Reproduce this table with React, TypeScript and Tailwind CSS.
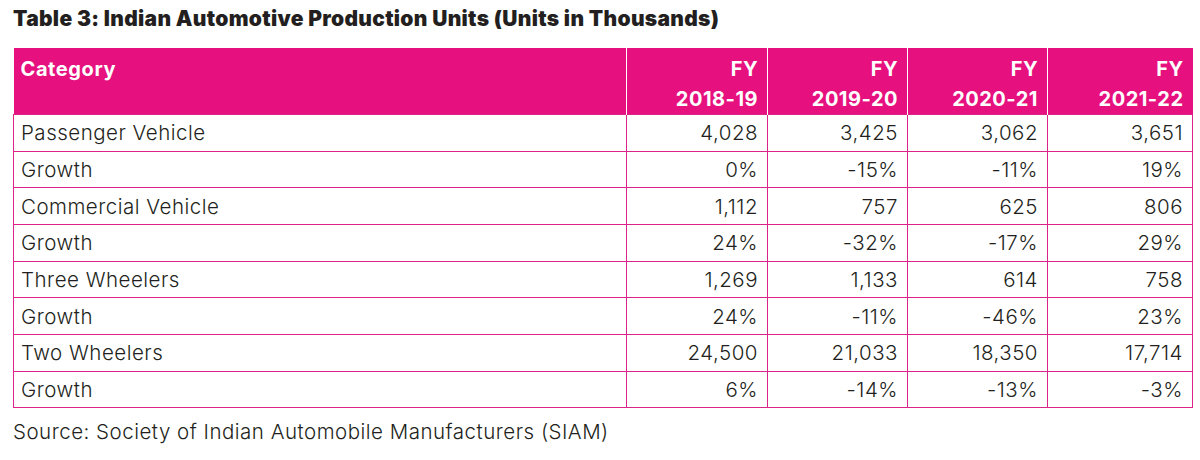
import React from "react";

const rows: [string, string, string, string, string][] = [
  ["Passenger Vehicle", "4,028", "3,425", "3,062", "3,651"],
  ["Growth", "0%", "-15%", "-11%", "19%"],
  ["Commercial Vehicle", "1,112", "757", "625", "806"],
  ["Growth", "24%", "-32%", "-17%", "29%"],
  ["Three Wheelers", "1,269", "1,133", "614", "758"],
  ["Growth", "24%", "-11%", "-46%", "23%"],
  ["Two Wheelers", "24,500", "21,033", "18,350", "17,714"],
  ["Growth", "6%", "-14%", "-13%", "-3%"],
];

const years = ["2018-19", "2019-20", "2020-21", "2021-22"];

export default function App() {
  return (
    <div className="w-[1200px] h-[460px] bg-white text-[#231f20] pl-[13px] pt-[6px]" style={{ fontFamily: "Inter, 'Liberation Sans', sans-serif" }}>
      <h1 className="text-[21px] leading-[26px] font-black tracking-[0.3px] text-[#231f20]">
        Table 3: Indian Automotive Production Units (Units in Thousands)
      </h1>
      <table className="mt-[16px] w-[1179px] border-collapse table-fixed">
        <colgroup>
          <col className="w-[613px]" />
          <col className="w-[141px]" />
          <col className="w-[140px]" />
          <col className="w-[140px]" />
          <col className="w-[145px]" />
        </colgroup>
        <thead>
          <tr className="bg-[#e6107e] text-white h-[66px]">
            <th className="align-top text-left font-bold text-[20px] leading-[30px] tracking-[0.6px] pl-[7px] pt-[6px] border-r-[1.5px] border-white">
              Category
            </th>
            {years.map((y, i) => (
              <th
                key={y}
                className={`align-top text-right font-bold text-[20px] leading-[30px] tracking-[0.5px] pr-[9px] pt-[6px] ${i < 3 ? "border-r-[1.5px] border-white" : ""}`}
              >
                <div>FY</div>
                <div>{y}</div>
              </th>
            ))}
          </tr>
        </thead>
        <tbody>
          {rows.map((r, ri) => (
            <tr key={ri} className="h-[36.67px]">
              {r.map((c, ci) => (
                <td
                  key={ci}
                  className={`border-[1.5px] border-[#dc2388] text-[20.5px] font-light leading-[24px] tracking-[0.5px] p-0 pt-[1px] ${ci === 0 ? "text-left pl-[7px]" : "text-right pr-[9px]"}`}
                >
                  {c}
                </td>
              ))}
            </tr>
          ))}
        </tbody>
      </table>
      <p className="mt-[12px] text-[20.5px] font-light leading-[24px] tracking-[0.5px]">
        Source: Society of Indian Automobile Manufacturers (SIAM)
      </p>
    </div>
  );
}
